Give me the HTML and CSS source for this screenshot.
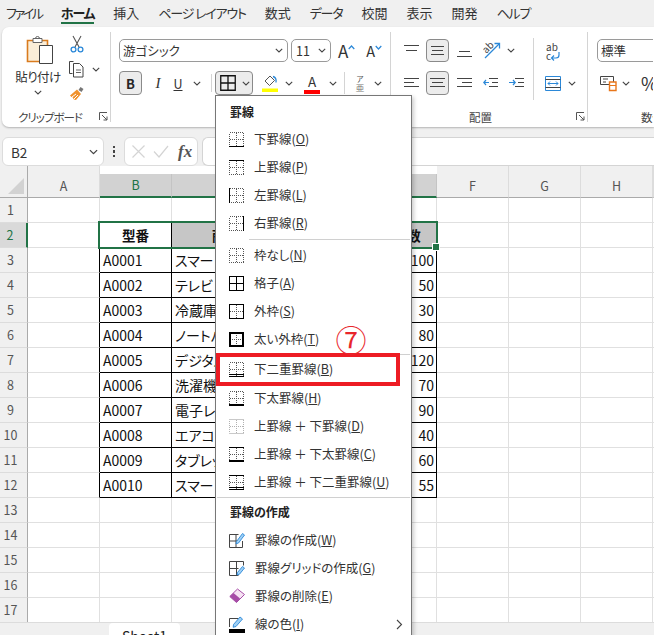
FILE: index.html
```html
<!DOCTYPE html>
<html lang="ja">
<head>
<meta charset="utf-8">
<title>Excel 罫線メニュー</title>
<link rel="stylesheet" href="styles.css">
</head>
<body>
<svg class="defs" width="0" height="0">
  <defs>
    <symbol id="chev" viewBox="0 0 8 5"><path d="M.8.8 4 4l3.2-3.2" fill="none" stroke="#444" stroke-width="1.1"/></symbol>
    <symbol id="dots" viewBox="0 0 15 15"><path d="M.5.5h14v14H.5zM7.500.5v14M.5 7.500h14" fill="none" stroke="#555" stroke-dasharray="1 1" shape-rendering="crispEdges"/></symbol>
  </defs>
</svg>

<nav class="tabs">
  <span class="tab kana first">ファイル</span><span class="tab active kana">ホーム</span><span class="tab">挿入</span><span class="tab kana">ページ レイアウト</span><span class="tab">数式</span><span class="tab kana">データ</span><span class="tab">校閲</span><span class="tab">表示</span><span class="tab">開発</span><span class="tab kana">ヘルプ</span>
</nav>

<section class="ribbon">
  <div class="group g-clip">
    <div class="clip-body">
      <div class="paste">
        <svg width="28" height="30" viewBox="0 0 28 30"><path d="M1.500 5.500h20v21h-20z" fill="#fbeed8" stroke="#d97b1e" stroke-width="1.600"/><path d="M7 3.500h9v4H7z" fill="#fff" stroke="#666"/><path d="M9.500 3.500a2 2 0 0 1 4 0" fill="none" stroke="#666"/><path d="M13.500 10.500h13v18h-13z" fill="#fff" stroke="#444"/></svg>
        <span class="paste-label">貼り付け</span>
        <svg class="c8" width="8" height="5"><use href="#chev"/></svg>
      </div>
      <div class="clip-tools">
        <svg width="14" height="18" viewBox="0 0 14 18"><path d="M3 1l6 11M11 1L5 12" fill="none" stroke="#555" stroke-width="1.100"/><circle cx="3.500" cy="14.500" r="2.400" fill="none" stroke="#2b88d8" stroke-width="1.300"/><circle cx="10.500" cy="14.500" r="2.400" fill="none" stroke="#2b88d8" stroke-width="1.300"/></svg>
        <div class="tool-row"><svg width="17" height="18" viewBox="0 0 17 18"><path d="M5.500 1.500H1.500v12h3M5.500 3.500h6l3.500 3.500v10h-9.500z" fill="#fff" stroke="#444"/><path d="M8 10h5M8 12.500h5" stroke="#666"/></svg><svg class="c8" width="8" height="5"><use href="#chev"/></svg></div>
        <svg width="16" height="16" viewBox="0 0 16 16"><path d="M9.500 5l2-3 3 2-2 3z" fill="#777"/><path d="M1 10.500 8 4.500l4 4.500-5 6c-2 0-3-1-3-2.500-1 0-2-1-3-2z" fill="#f0922e"/><path d="M3 12l4-3M5 14l4-4" stroke="#fff"/></svg>
      </div>
    </div>
    <div class="g-label"><span>クリップボード</span></div>
    <svg class="launch" width="9" height="9" viewBox="0 0 9 9"><path d="M.5 8V.5H8M3 3l5 5M8 4.500V8H4.500" fill="none" stroke="#555"/></svg>
  </div>

  <div class="group g-font">
    <div class="row">
      <div class="combo font-name"><span>游ゴシック</span><svg width="8" height="5"><use href="#chev"/></svg></div>
      <div class="combo font-size"><span>11</span><svg width="8" height="5"><use href="#chev"/></svg></div>
      <span class="grow-a">A<svg width="7" height="5" viewBox="0 0 7 5"><path d="M.7 4 3.500 1l2.800 3" fill="none" stroke="#2b88d8" stroke-width="1.200"/></svg></span>
      <span class="shrink-a">A<svg width="7" height="5" viewBox="0 0 7 5"><path d="M.7 1l2.800 3 2.800-3" fill="none" stroke="#2b88d8" stroke-width="1.200"/></svg></span>
    </div>
    <div class="row row2">
      <span class="btn on bold-b">B</span>
      <span class="ital">I</span>
      <span class="under">U</span>
      <svg class="c8 u-chev" width="8" height="5"><use href="#chev"/></svg>
      <span class="vsep vs1"></span>
      <span class="btn on border-btn">
        <svg width="16" height="16" viewBox="0 0 16 16"><path d="M.75.75h14.500v14.500H.75zM8 .75v14.500M.75 8h14.500" fill="none" stroke="#111" stroke-width="1.300"/></svg>
        <svg width="8" height="5"><use href="#chev"/></svg>
      </span>
      <span class="fill"><svg width="16" height="18" viewBox="0 0 16 18"><path d="M3 7l5-5 4.500 4.500-5 5z" fill="#fff" stroke="#555"/><path d="M11 2.500c2 .5 3.500 2.500 3 6" fill="none" stroke="#2b88d8" stroke-width="1.300"/><path d="M0 14.500h16V18H0z" fill="#ff0"/></svg></span>
      <svg class="c8 f-chev" width="8" height="5"><use href="#chev"/></svg>
      <span class="color-a">A<i></i></span>
      <svg class="c8 a-chev" width="8" height="5"><use href="#chev"/></svg>
      <span class="vsep vs2"></span>
      <span class="ruby"><b>ア</b><i>亜</i></span>
      <svg class="c8 r-chev" width="8" height="5"><use href="#chev"/></svg>
    </div>
  </div>

  <div class="group g-align">
    <div class="align-cols">
      <div class="align-main">
        <div class="row">
          <svg class="al" width="15" height="15" viewBox="0 0 15 15"><path d="M0 2.500h15M2 7.500h11" stroke="#444"/></svg>
          <span class="btn on al-btn"><svg width="15" height="11" viewBox="0 0 15 11"><path d="M1 1.500h13M2 5.500h11M1 9.500h13" stroke="#444"/></svg></span>
          <svg class="al3" width="15" height="15" viewBox="0 0 15 15"><path d="M2 8.500h11M0 13.500h15" stroke="#444"/></svg>
          <svg class="orient" width="18" height="19" viewBox="0 0 18 19"><path d="M2 17 16 3" stroke="#2b88d8" stroke-width="1.300"/><path d="M11.500 2.500H16.500V7.500" fill="none" stroke="#2b88d8" stroke-width="1.300"/><text x="0" y="11" class="svgt" transform="rotate(-45 4 8)">ab</text></svg>
          <svg class="c8 o-chev" width="8" height="5"><use href="#chev"/></svg>
        </div>
        <div class="row row2">
          <svg class="al" width="15" height="13" viewBox="0 0 15 13"><path d="M0 1.500h15M0 5.500h10M0 9.500h15" stroke="#444"/></svg>
          <span class="btn on al-btn al-btn2"><svg width="15" height="13" viewBox="0 0 15 13"><path d="M0 1.500h15M2 5.500h11M0 9.500h15" stroke="#444"/></svg></span>
          <svg class="al3" width="15" height="13" viewBox="0 0 15 13"><path d="M0 1.500h15M5 5.500h10M0 9.500h15" stroke="#444"/></svg>
          <svg class="ind1" width="15" height="13" viewBox="0 0 15 13"><path d="M6 1.500h9M9 5.500h6M6 9.500h9" stroke="#444"/><path d="M6 5.500H.8M3 3 .8 5.500 3 8" fill="none" stroke="#2b88d8" stroke-width="1.200"/></svg>
          <svg class="ind2" width="15" height="13" viewBox="0 0 15 13"><path d="M6 1.500h9M9 5.500h6M6 9.500h9" stroke="#444"/><path d="M0 5.500h6M4 3l2.200 2.500L4 8" fill="none" stroke="#2b88d8" stroke-width="1.200"/></svg>
        </div>
      </div>
      <span class="vsep vs3"></span>
      <div class="align-side">
        <svg width="16" height="19" viewBox="0 0 16 19"><text x="1" y="8" class="svgt">ab</text><text x="1" y="17" class="svgt">c</text><path d="M14 9v3a3 3 0 0 1-3 3H6.500M9 12.500 6.500 15 9 17.500" fill="none" stroke="#2b88d8" stroke-width="1.200"/></svg>
        <div class="merge"><svg width="16" height="15" viewBox="0 0 16 15"><path d="M.5.500h15v14H.5z" fill="#fff" stroke="#2b88d8"/><path d="M.5 3.500h15M.5 11.500h15" stroke="#444"/><path d="M3 7.500h10M5 5.500l-2 2 2 2M11 5.500l2 2-2 2" fill="none" stroke="#2b88d8"/></svg><svg width="8" height="5"><use href="#chev"/></svg></div>
      </div>
    </div>
    <div class="g-label"><span>配置</span></div>
    <svg class="launch" width="9" height="9" viewBox="0 0 9 9"><path d="M.5 8V.5H8M3 3l5 5M8 4.500V8H4.500" fill="none" stroke="#555"/></svg>
  </div>

  <div class="group g-num">
    <div class="row"><div class="combo num-format"><span>標準</span></div></div>
    <div class="row row2 num-row">
      <svg width="17" height="18" viewBox="0 0 17 18"><path d="M.5 2.500h13v8H.5z" fill="#fff" stroke="#444"/><path d="M3 5h5M3 8h3" stroke="#444"/><path d="M9.500 8h6.500v8.500H9.500z" fill="#fff" stroke="#e8761a" stroke-width="1.400"/><path d="M9.500 11.500h6.500" stroke="#e8761a"/></svg>
      <svg class="c8 n-chev" width="8" height="5"><use href="#chev"/></svg>
      <span class="pct">%</span>
    </div>
    <div class="g-label"><span>数値</span></div>
  </div>
</section>

<section class="formula">
  <div class="namebox"><span>B2</span><svg width="9" height="6" viewBox="0 0 8 5"><use href="#chev"/></svg></div>
  <div class="fdots"><i></i><i></i><i></i></div>
  <div class="fbtns">
    <svg width="15" height="15" viewBox="0 0 15 15"><path d="M1.500 1.500l12 12M13.500 1.500l-12 12" stroke="#d4d4d4" stroke-width="1.200"/></svg>
    <svg width="16" height="13" viewBox="0 0 16 13"><path d="M1 6.500 6 12 15 1" fill="none" stroke="#d4d4d4" stroke-width="1.200"/></svg>
    <span class="fx">fx</span>
  </div>
  <div class="fbox"></div>
</section>

<section class="sheet">
  <div class="sheet-grid">
    <div class="corner"><i></i></div><div class="ch">A</div><div class="ch sel">B</div><div class="ch sel"></div><div class="ch sel"></div><div class="ch sel"></div><div class="ch">F</div><div class="ch">G</div><div class="ch">H</div><div class="ch"></div>

    <div class="rh">1</div><div class="c"></div><div class="c"></div><div class="c"></div><div class="c"></div><div class="c"></div><div class="c"></div><div class="c"></div><div class="c"></div><div class="c"></div>

    <div class="rh rsel">2</div><div class="c edge"></div><div class="c tb th">型番</div><div class="c tb th gr">商品名</div><div class="c tb th gr">単価</div><div class="c tb th gr">在庫数</div><div class="c"></div><div class="c"></div><div class="c"></div><div class="c"></div>

    <div class="rh">3</div><div class="c edge"></div><div class="c tb">A0001</div><div class="c tb">スマートフォン</div><div class="c tb"></div><div class="c tb num">100</div><div class="c"></div><div class="c"></div><div class="c"></div><div class="c"></div>
    <div class="rh">4</div><div class="c edge"></div><div class="c tb">A0002</div><div class="c tb">テレビ</div><div class="c tb"></div><div class="c tb num">50</div><div class="c"></div><div class="c"></div><div class="c"></div><div class="c"></div>
    <div class="rh">5</div><div class="c edge"></div><div class="c tb">A0003</div><div class="c tb">冷蔵庫</div><div class="c tb"></div><div class="c tb num">30</div><div class="c"></div><div class="c"></div><div class="c"></div><div class="c"></div>
    <div class="rh">6</div><div class="c edge"></div><div class="c tb">A0004</div><div class="c tb">ノートパソコン</div><div class="c tb"></div><div class="c tb num">80</div><div class="c"></div><div class="c"></div><div class="c"></div><div class="c"></div>
    <div class="rh">7</div><div class="c edge"></div><div class="c tb">A0005</div><div class="c tb">デジタルカメラ</div><div class="c tb"></div><div class="c tb num">120</div><div class="c"></div><div class="c"></div><div class="c"></div><div class="c"></div>
    <div class="rh">8</div><div class="c edge"></div><div class="c tb">A0006</div><div class="c tb">洗濯機</div><div class="c tb"></div><div class="c tb num">70</div><div class="c"></div><div class="c"></div><div class="c"></div><div class="c"></div>
    <div class="rh">9</div><div class="c edge"></div><div class="c tb">A0007</div><div class="c tb">電子レンジ</div><div class="c tb"></div><div class="c tb num">90</div><div class="c"></div><div class="c"></div><div class="c"></div><div class="c"></div>
    <div class="rh">10</div><div class="c edge"></div><div class="c tb">A0008</div><div class="c tb">エアコン</div><div class="c tb"></div><div class="c tb num">40</div><div class="c"></div><div class="c"></div><div class="c"></div><div class="c"></div>
    <div class="rh">11</div><div class="c edge"></div><div class="c tb">A0009</div><div class="c tb">タブレット</div><div class="c tb"></div><div class="c tb num">60</div><div class="c"></div><div class="c"></div><div class="c"></div><div class="c"></div>
    <div class="rh">12</div><div class="c edge"></div><div class="c tb">A0010</div><div class="c tb">スマートウォッチ</div><div class="c tb"></div><div class="c tb num">55</div><div class="c"></div><div class="c"></div><div class="c"></div><div class="c"></div>

    <div class="rh">13</div><div class="c"></div><div class="c"></div><div class="c"></div><div class="c"></div><div class="c"></div><div class="c"></div><div class="c"></div><div class="c"></div><div class="c"></div>
    <div class="rh">14</div><div class="c"></div><div class="c"></div><div class="c"></div><div class="c"></div><div class="c"></div><div class="c"></div><div class="c"></div><div class="c"></div><div class="c"></div>
    <div class="rh">15</div><div class="c"></div><div class="c"></div><div class="c"></div><div class="c"></div><div class="c"></div><div class="c"></div><div class="c"></div><div class="c"></div><div class="c"></div>
    <div class="rh">16</div><div class="c"></div><div class="c"></div><div class="c"></div><div class="c"></div><div class="c"></div><div class="c"></div><div class="c"></div><div class="c"></div><div class="c"></div>
    <div class="rh">17</div><div class="c"></div><div class="c"></div><div class="c"></div><div class="c"></div><div class="c"></div><div class="c"></div><div class="c"></div><div class="c"></div><div class="c"></div>
  </div>
  <div class="selection"><i></i></div>
</section>

<footer class="sheet-tabs"><span class="sheet-tab">Sheet1</span></footer>

<aside class="menu">
  <div class="m-head">罫線</div>
  <div class="m-item"><svg width="15" height="15"><use href="#dots"/><path d="M0 14.500h15" stroke="#000" shape-rendering="crispEdges"/></svg><span>下罫線(<u>O</u>)</span></div>
  <div class="m-item"><svg width="15" height="15"><use href="#dots"/><path d="M0 .5h15" stroke="#000" shape-rendering="crispEdges"/></svg><span>上罫線(<u>P</u>)</span></div>
  <div class="m-item"><svg width="15" height="15"><use href="#dots"/><path d="M.5 0v15" stroke="#000" shape-rendering="crispEdges"/></svg><span>左罫線(<u>L</u>)</span></div>
  <div class="m-item"><svg width="15" height="15"><use href="#dots"/><path d="M14.500 0v15" stroke="#000" shape-rendering="crispEdges"/></svg><span>右罫線(<u>R</u>)</span></div>
  <div class="m-sep short"></div>
  <div class="m-item"><svg width="15" height="15"><use href="#dots"/></svg><span>枠なし(<u>N</u>)</span></div>
  <div class="m-item"><svg width="15" height="15"><path d="M.5.5h14v14H.5zM7.500.5v14M.5 7.500h14" fill="none" stroke="#000" shape-rendering="crispEdges"/></svg><span>格子(<u>A</u>)</span></div>
  <div class="m-item"><svg width="15" height="15"><use href="#dots"/><path d="M.5.5h14v14H.5z" fill="none" stroke="#000" shape-rendering="crispEdges"/></svg><span>外枠(<u>S</u>)</span></div>
  <div class="m-item"><svg width="15" height="15"><use href="#dots"/><path d="M1 1h13v13H1z" fill="none" stroke="#000" stroke-width="2" shape-rendering="crispEdges"/></svg><span>太い外枠(<u>T</u>)</span></div>
  <div class="m-sep thin"></div>
  <div class="m-item"><svg width="15" height="15"><use href="#dots"/><path d="M0 12.500h15M0 14.500h15" stroke="#000" shape-rendering="crispEdges"/></svg><span>下二重罫線(<u>B</u>)</span></div>
  <div class="m-item gap1"><svg width="15" height="15"><use href="#dots"/><path d="M0 14h15" stroke="#000" stroke-width="2" shape-rendering="crispEdges"/></svg><span>下太罫線(<u>H</u>)</span></div>
  <div class="m-item"><svg width="15" height="15" class="faint"><use href="#dots"/><path d="M0 .5h15M0 14.500h15" stroke="#888" shape-rendering="crispEdges"/></svg><span>上罫線 ＋ 下罫線(<u>D</u>)</span></div>
  <div class="m-item"><svg width="15" height="15"><use href="#dots"/><path d="M0 .5h15" stroke="#000" shape-rendering="crispEdges"/><path d="M0 14h15" stroke="#000" stroke-width="2" shape-rendering="crispEdges"/></svg><span>上罫線 ＋ 下太罫線(<u>C</u>)</span></div>
  <div class="m-item"><svg width="15" height="15"><use href="#dots"/><path d="M0 .5h15M0 12.500h15M0 14.500h15" stroke="#000" shape-rendering="crispEdges"/></svg><span>上罫線 ＋ 下二重罫線(<u>U</u>)</span></div>
  <div class="m-sep thin"></div>
  <div class="m-head second">罫線の作成</div>
  <div class="m-item"><svg width="16" height="16" viewBox="0 0 16 16"><path d="M.5 2.500h9M.5 2.500v13h13V9M.5 9h9M7 2.500v13" fill="none" stroke="#444"/><path d="M7.500 9.500 13.500 1.500l2 1.500-6 8-2.500.8z" fill="#9fd0f5" stroke="#2b88d8" stroke-width=".9"/></svg><span>罫線の作成(<u>W</u>)</span></div>
  <div class="m-item"><svg width="16" height="16" viewBox="0 0 16 16"><path d="M.5 1.500h14M.5 1.500v14h9M.5 8.500h9M7.500 1.500v14M14.500 1.500v4" fill="none" stroke="#444"/><path d="M8.500 12.500 13.500 6.500l2 1.500-5 6.200-2.500.8z" fill="#9fd0f5" stroke="#2b88d8" stroke-width=".9"/></svg><span>罫線グリッドの作成(<u>G</u>)</span></div>
  <div class="m-item"><svg width="16" height="16" viewBox="0 0 16 16"><path d="M.8 8.500 8.500 1 15.500 6.500 7.500 14.500z" fill="#f6e3f3" stroke="#a64ca6"/><path d="M.8 8.500 4.500 5 11 10.500 7.500 14.500z" fill="#a64ca6"/></svg><span>罫線の削除(<u>E</u>)</span></div>
  <div class="m-item last"><svg width="16" height="17" viewBox="0 0 16 17"><path d="M.5 11V2.500h9" fill="none" stroke="#444"/><path d="M4.500 8.500 11 1l2.500 2L7 10.500l-2.800.8z" fill="#9fd0f5" stroke="#2b88d8" stroke-width=".9"/><path d="M0 13h16v4H0z" fill="#000"/></svg><span>線の色(<u>I</u>)</span><svg class="m-arrow" width="7" height="11" viewBox="0 0 7 11"><path d="M1 1l4.500 4.500L1 10" fill="none" stroke="#444" stroke-width="1.100"/></svg></div>
</aside>

<div class="callout"></div>
<div class="step">⑦</div>
</body>
</html>
```

FILE: styles.css
```css
* { box-sizing: border-box; }
html, body { margin: 0; padding: 0; }
body {
  position: relative;
  width: 654px;
  height: 635px;
  overflow: hidden;
  background: #f0f0f0;
  color: #262626;
  font-family: "Noto Sans CJK JP", "Noto Sans", sans-serif;
  font-feature-settings: "palt";
  font-size: 12.5px;
}
.defs { position: absolute; }
svg { display: block; flex: none; }

/* ribbon tabs */
.tabs { display: flex; height: 27px; padding: 3px 0 0 6px; gap: 19px; line-height: 19px; font-size: 13px; color: #333; }
.tab { height: 21px; white-space: nowrap; }
.tab.kana { letter-spacing: -1.200px; }
.tab.kana.first { letter-spacing: -2.300px; }
.tab.active { font-weight: 700; border-bottom: 2px solid #217346; color: #222; }

/* ribbon */
.ribbon { display: flex; height: 100px; margin-left: 2px; width: 652px; overflow: hidden; background: #fff; border-radius: 7px 0 0 7px; box-shadow: 0 1px 2px rgba(0,0,0,.25); }
.group { position: relative; height: 100%; flex: none; }
.group::after { content: ""; position: absolute; right: 0; top: 5px; height: 90px; width: 1px; background: #d4d4d4; }
.g-label { position: absolute; left: 0; right: 0; bottom: 1px; text-align: center; font-size: 11.500px; line-height: 18px; color: #444; white-space: nowrap; }
.launch { position: absolute; bottom: 6px; }
.row { display: flex; align-items: center; height: 23px; }
.row2 { height: 24px; margin-top: 9px; }
.btn { display: flex; align-items: center; justify-content: center; border-radius: 4px; }
.btn.on { background: #ececec; border: 1px solid #8a8a8a; }
.combo { display: flex; align-items: center; justify-content: space-between; height: 23px; border: 1px solid #9a9a9a; border-radius: 5px; padding: 0 4px 0 3px; background: #fff; font-size: 12.500px; color: #333; }
.vsep { width: 1px; background: #d4d4d4; flex: none; }

.g-clip { width: 109px; }
.g-clip .launch { right: 3px; }
.g-clip .g-label { letter-spacing: -1px; right: 16px; left: 0; padding-left: 3px; }
.clip-body { display: flex; padding: 8px 0 0 15px; }
.paste { display: flex; flex-direction: column; align-items: center; width: 42px; }
.paste svg:first-child { margin-left: 3px; }
.paste-label { font-size: 12.500px; line-height: 16px; margin-top: 4px; white-space: nowrap; color: #333; letter-spacing: -.5px; }
.paste .c8 { margin-top: 5px; }
.clip-tools { display: flex; flex-direction: column; align-items: flex-start; margin-left: 9px; gap: 7px; }
.clip-tools > svg:first-child { margin-left: 2px; }
.clip-tools > svg:last-child { margin-left: 1px; }
.tool-row { display: flex; align-items: center; gap: 7px; }

.g-font { width: 280px; padding: 12px 0 0 8px; }
.font-name { width: 169px; }
.font-size { width: 40px; margin-left: 3px; padding-left: 4px; }
.grow-a, .shrink-a { display: flex; align-items: flex-start; color: #333; line-height: 23px; }
.grow-a { font-size: 17px; margin-left: 7px; }
.shrink-a { font-size: 14.500px; margin-left: 11px; }
.grow-a svg, .shrink-a svg { margin-top: 6px; }
.bold-b { width: 23px; height: 24px; font-weight: 700; font-size: 13px; }
.ital { width: 10px; margin-left: 11px; font-family: "Liberation Serif", serif; font-style: italic; font-size: 15px; text-align: center; color: #333; }
.under { width: 12px; margin-left: 9px; font-size: 12.500px; text-decoration: underline; text-align: center; color: #333; }
.u-chev { margin-left: 9px; }
.vs1 { height: 18px; margin-left: 10px; }
.border-btn { width: 38px; height: 24px; margin-left: 3px; gap: 6px; padding: 0 0 0 1px; }
.fill { margin-left: 9px; }
.f-chev { margin-left: 7px; }
.color-a { position: relative; width: 16px; margin-left: 11px; font-size: 13.500px; line-height: 20px; text-align: center; height: 24px; color: #333; }
.color-a i { position: absolute; left: 0; right: 0; bottom: 1px; height: 4px; background: #f00; }
.a-chev { margin-left: 9px; }
.vs2 { height: 22px; margin-left: 7px; }
.ruby { display: flex; flex-direction: column; align-items: center; width: 10px; margin-left: 10px; }
.ruby b { font-weight: 400; font-size: 7.500px; line-height: 8px; color: #555; }
.ruby i { font-style: normal; font-size: 8.500px; line-height: 9px; color: #777; }
.r-chev { margin-left: 9px; }

.g-align { width: 197px; }
.align-cols { display: flex; padding: 12px 0 0 13px; }
.align-main { width: 129px; flex: none; }
.al-btn { width: 23px; height: 23px; margin-left: 7px; }
.al-btn2 { height: 24px; }
.al3 { margin-left: 8px; }
.orient { margin-left: 11px; }
.o-chev { margin-left: 6px; }
.ind1 { margin-left: 11px; }
.ind2 { margin-left: 11px; }
.vs3 { height: 62px; margin-top: -1px; }
.align-side { display: flex; flex-direction: column; padding: 4px 0 0 11px; gap: 14px; }
.merge { display: flex; align-items: center; gap: 7px; }
.svgt { font-size: 10px; fill: #444; }
.g-align .launch { right: 3px; }
.g-align .g-label { right: 18px; }

.g-num { padding: 12px 0 0 9px; width: 65px; overflow: hidden; }
.g-num::after { display: none; }
.num-format { width: 120px; padding-left: 3px; flex: none; }
.num-row { padding-left: 3px; }
.n-chev { margin-left: 5px; }
.pct { margin-left: 11px; font-size: 18px; color: #333; }
.g-num .g-label { text-align: left; padding-left: 53px; }

/* formula bar */
.formula { display: flex; height: 39px; padding: 10px 0 0 2px; }
.namebox { display: flex; align-items: center; justify-content: space-between; width: 102px; height: 29px; padding: 0 5px 0 8px; background: #fff; border: 1px solid #dcdcdc; border-radius: 6px; font-size: 13.500px; color: #333; }
.fdots { display: flex; flex-direction: column; align-items: center; justify-content: center; gap: 2px; width: 20px; }
.fdots i { width: 2.500px; height: 2.500px; background: #444; }
.fbtns { display: flex; align-items: center; width: 74px; height: 29px; padding-left: 6px; gap: 7px; background: #fff; border: 1px solid #dcdcdc; border-radius: 6px; }
.fx { font-family: "Liberation Serif", serif; font-style: italic; font-weight: 700; font-size: 17px; color: #555; margin-left: 2px; }
.fbox { flex: 1; height: 29px; margin-left: 4px; background: #fff; border: 1px solid #d4d4d4; border-right: 0; border-radius: 6px 0 0 6px; }

/* sheet */
.sheet { position: relative; height: 456px; overflow: hidden; background: #fff; }
.sheet-grid { display: grid; grid-template-columns: 28px 72px 72px 121px 72px 72px 72px 72px 72px 1px; grid-template-rows: 32px repeat(17, 25px); }
.corner { position: relative; background: #f0f0f0; border-right: 1px solid #aaa; border-bottom: 1px solid #aaa; }
.corner i { position: absolute; left: 8px; top: 12px; width: 0; height: 0; border-style: solid; border-width: 0 0 16px 16px; border-color: transparent transparent #d2d2d2 transparent; }
.ch { background: #f0f0f0; border-bottom: 1px solid #aaa; border-right: 1px solid #dcdcdc; padding-top: 8px; text-align: center; line-height: 24px; font-size: 12.500px; color: #555; }
.ch.sel { margin-top: 8px; padding-top: 0; background: #d2d2d2; border-bottom: 2px solid #217346; color: #217346; line-height: 22px; border-right-color: #c4c4c4; }
.rh { background: #f0f0f0; border-right: 1px solid #aaa; border-bottom: 1px solid #dcdcdc; padding-right: 6px; text-align: center; line-height: 24px; font-size: 12.500px; color: #555; }
.rh.rsel { background: #d9d9d9; color: #217346; border-right: 2px solid #217346; }
.c { border-right: 1px solid #e0e0e0; border-bottom: 1px solid #e0e0e0; padding: 0 3px; line-height: 24px; font-size: 14px; color: #111; white-space: nowrap; overflow: hidden; }
.c.edge { border-right-color: #000; }
.c.tb { border-right-color: #000; border-bottom-color: #000; }
.c.th { text-align: center; font-weight: 700; font-size: 13.500px; }
.c.gr { background: #c6c6c6; }
.c.num { text-align: right; padding-right: 2px; }
.selection { position: absolute; left: 98px; top: 55px; width: 340px; height: 28px; border: 2px solid #217346; }
.selection i { position: absolute; right: -3px; bottom: -3px; width: 6px; height: 6px; background: #217346; outline: 1px solid #fff; }

/* sheet tabs */
.sheet-tabs { height: 13px; padding-left: 109px; overflow: hidden; background: #f0f0f0; border-top: 1px solid #dcdcdc; }
.sheet-tab { display: block; width: 71px; height: 30px; background: #fff; border-radius: 4px 4px 0 0; text-align: center; line-height: 26px; font-size: 14px; color: #222; }

/* borders menu */
.menu { position: absolute; left: 215px; top: 95px; width: 197px; height: 560px; background: #fff; border: 1px solid #777; box-shadow: 2px 2px 4px rgba(0,0,0,.2); }
.m-head { height: 29px; padding: 7px 0 0 14px; line-height: 17px; font-size: 12px; font-weight: 700; color: #222; }
.m-head.second { height: 28px; padding-top: 5px; }
.m-item { display: flex; align-items: center; height: 28px; padding: 0 0 0 13px; gap: 10px; font-size: 12.500px; line-height: 18px; color: #333; white-space: nowrap; }
.m-item.gap1 { margin-top: 1px; }
.m-item svg.faint { opacity: .45; }
.m-arrow { margin-left: auto; margin-right: 8px; }
.m-sep { height: 4px; display: flex; }
.m-sep::after { content: ""; align-self: center; height: 1px; flex: 1; margin-right: 1px; background: #d0d0d0; }
.m-sep.short::after { margin-left: 33px; }
.m-sep.thin { height: 2px; }
.m-sep.thin::after { margin-left: 1px; }

/* annotations */
.callout { position: absolute; left: 216px; top: 353px; width: 184px; height: 33px; border: 4px solid #ed1c24; }
.step { position: absolute; left: 335px; top: 318px; width: 32px; text-align: center; font-size: 31px; line-height: 42px; color: #e8262c; }
```
